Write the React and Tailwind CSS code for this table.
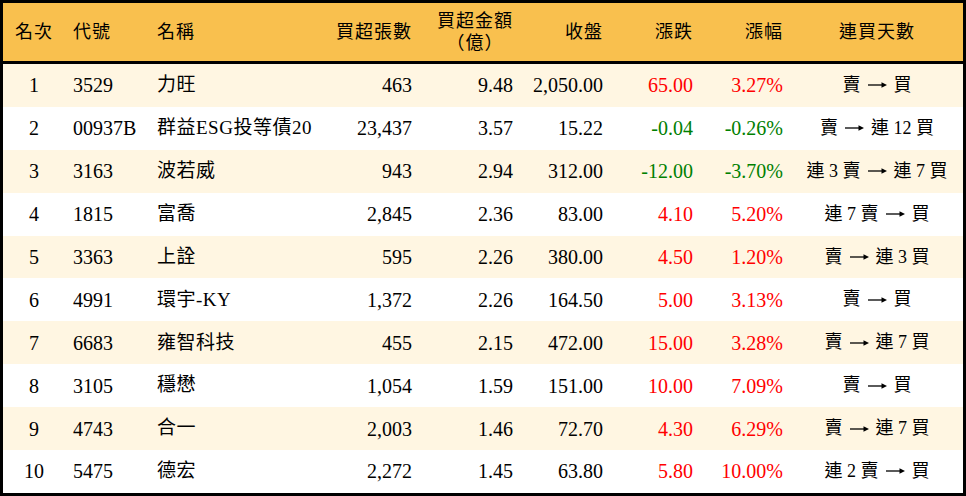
const rows = [
  ["1", "3529", "力旺", "463", "9.48", "2,050.00", "65.00", "3.27%", "賣 → 買"],
  ["2", "00937B", "群益ESG投等債20", "23,437", "3.57", "15.22", "-0.04", "-0.26%", "賣 → 連 12 買"],
  ["3", "3163", "波若威", "943", "2.94", "312.00", "-12.00", "-3.70%", "連 3 賣 → 連 7 買"],
  ["4", "1815", "富喬", "2,845", "2.36", "83.00", "4.10", "5.20%", "連 7 賣 → 買"],
  ["5", "3363", "上詮", "595", "2.26", "380.00", "4.50", "1.20%", "賣 → 連 3 買"],
  ["6", "4991", "環宇-KY", "1,372", "2.26", "164.50", "5.00", "3.13%", "賣 → 買"],
  ["7", "6683", "雍智科技", "455", "2.15", "472.00", "15.00", "3.28%", "賣 → 連 7 買"],
  ["8", "3105", "穩懋", "1,054", "1.59", "151.00", "10.00", "7.09%", "賣 → 買"],
  ["9", "4743", "合一", "2,003", "1.46", "72.70", "4.30", "6.29%", "賣 → 連 7 買"],
  ["10", "5475", "德宏", "2,272", "1.45", "63.80", "5.80", "10.00%", "連 2 賣 → 買"],
];

const cols = "grid grid-cols-[62px_84px_181px_90px_101px_90px_90px_90px_172px]";
const font = { fontFamily: '"Liberation Serif", "Noto Sans CJK TC", serif' };

function Arrow() {
  return (
    <svg width="19" height="10" viewBox="0 0 19 10" className="inline-block mx-[7px] align-middle">
      <line x1="0" y1="5" x2="16" y2="5" stroke="black" strokeWidth="1.3" />
      <path d="M13.5 2.3 L19 5 L13.5 7.7 Z" fill="black" />
    </svg>
  );
}

function Streak({ text }) {
  const [from, to] = text.split(" → ");
  return (
    <span className="inline-flex items-center">
      <span>{from}</span>
      <Arrow />
      <span>{to}</span>
    </span>
  );
}

export default function App() {
  return (
    <div className="w-[966px] h-[496px] bg-white" style={font}>
      <div className="border-[3px] border-black bg-white text-black">
        <div className={`${cols} h-[61px] items-center bg-[#f9c04e] text-[18px] tracking-[1px] border-b-[3px] border-black`}>
          <div className="text-center">名次</div>
          <div className="pl-2">代號</div>
          <div className="pl-2">名稱</div>
          <div className="pr-2 text-right">買超張數</div>
          <div className="pr-2 flex flex-col items-end leading-[22px]">
            <span>買超金額</span>
            <span className="w-[76px] text-center">（億）</span>
          </div>
          <div className="pr-2 text-right">收盤</div>
          <div className="pr-2 text-right">漲跌</div>
          <div className="pr-2 text-right">漲幅</div>
          <div className="text-center">連買天數</div>
        </div>
        {rows.map((r, i) => {
          const neg = r[6].startsWith("-");
          const color = neg ? "text-[#008000]" : "text-[#ff0000]";
          return (
            <div
              key={r[0]}
              className={`${cols} h-[42.9px] items-center text-[20px] ${i % 2 === 0 ? "bg-[#fff6e2]" : "bg-white"}`}
            >
              <div className="text-center">{r[0]}</div>
              <div className="pl-2">{r[1]}</div>
              <div className="pl-2 text-[19px] tracking-[0.5px]">{r[2]}</div>
              <div className="pr-2 text-right">{r[3]}</div>
              <div className="pr-2 text-right">{r[4]}</div>
              <div className="pr-2 text-right">{r[5]}</div>
              <div className={`pr-2 text-right ${color}`}>{r[6]}</div>
              <div className={`pr-2 text-right ${color}`}>{r[7]}</div>
              <div className="text-center text-[18px] whitespace-pre">
                <Streak text={r[8]} />
              </div>
            </div>
          );
        })}
      </div>
    </div>
  );
}
